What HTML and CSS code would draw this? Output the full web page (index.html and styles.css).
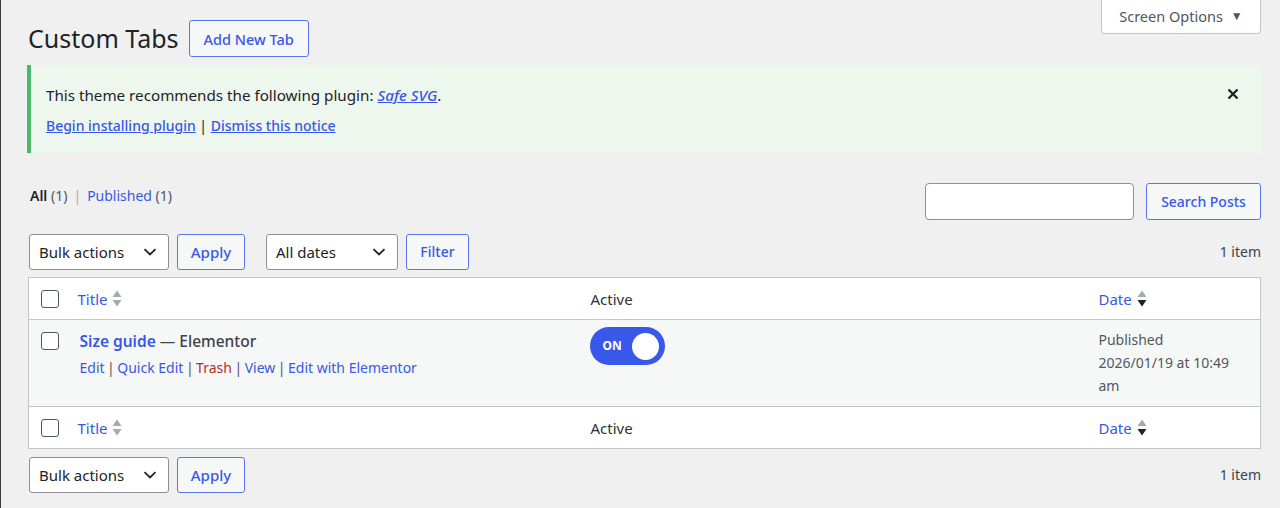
FILE: index.html
```html
<!DOCTYPE html>
<html>
<head>
    <meta charset="utf-8"/>
    <title>Custom Tabs</title>
    <link rel="stylesheet" href="styles.css">
</head>
<body>
<div class="wrap">
    <!--页头-->
    <div class="page-top">
        <div class="heading">
            <h1>Custom Tabs</h1>
            <a class="btn btn-head">Add New Tab</a>
        </div>
        <div class="screen-tab">Screen Options <span class="tab-arrow">&#9660;</span></div>
    </div>

    <!--插件提示-->
    <div class="notice">
        <p class="notice-text">This theme recommends the following plugin: <a class="plugin-link"><em>Safe SVG</em></a>.</p>
        <p class="notice-links"><a>Begin installing plugin</a> | <a>Dismiss this notice</a></p>
        <span class="notice-close">
            <svg width="12" height="12" viewBox="0 0 12 12"><path d="M1.5 1.5L10.5 10.5M10.5 1.5L1.5 10.5" stroke="#1d2327" stroke-width="2.4" fill="none"/></svg>
        </span>
    </div>

    <div class="filter-row">
        <ul class="subsubsub">
            <li class="current">All <span class="count">(1)</span></li>
            <li class="sep">|</li>
            <li><a>Published</a> <span class="count">(1)</span></li>
        </ul>
        <div class="search-box">
            <input class="search-input" type="text">
            <a class="btn">Search Posts</a>
        </div>
    </div>

    <div class="tablenav">
        <div class="actions">
            <div class="select select-bulk"><span>Bulk actions</span>
                <svg width="14" height="8" viewBox="0 0 14 8"><path d="M1.5 1.2L7 6.5L12.5 1.2" stroke="#1d2327" stroke-width="1.8" fill="none"/></svg>
            </div>
            <a class="btn btn-apply">Apply</a>
            <div class="select select-dates"><span>All dates</span>
                <svg width="14" height="8" viewBox="0 0 14 8"><path d="M1.5 1.2L7 6.5L12.5 1.2" stroke="#1d2327" stroke-width="1.8" fill="none"/></svg>
            </div>
            <a class="btn btn-filter">Filter</a>
        </div>
        <div class="num-items">1 item</div>
    </div>

    <table class="list-table">
        <colgroup>
            <col class="col-cb">
            <col class="col-title">
            <col class="col-active">
            <col class="col-date">
        </colgroup>
        <thead>
        <tr>
            <th><span class="checkbox"></span></th>
            <th><a class="sort-link">Title
                <svg class="sort-icon" width="10" height="17" viewBox="0 0 10 17"><path d="M5 0.5L9.5 7H0.5Z" fill="#a7aaad"/><path d="M0.5 10H9.5L5 16.5Z" fill="#a7aaad"/></svg>
            </a></th>
            <th>Active</th>
            <th><a class="sort-link">Date
                <svg class="sort-icon" width="10" height="17" viewBox="0 0 10 17"><path d="M5 0.5L9.5 7H0.5Z" fill="#a7aaad"/><path d="M0.5 10H9.5L5 16.5Z" fill="#1d2327"/></svg>
            </a></th>
        </tr>
        </thead>
        <tbody>
        <tr class="row-alt">
            <td><span class="checkbox checkbox-row"></span></td>
            <td>
                <div class="row-title"><a>Size guide</a> <span class="post-state">&mdash; Elementor</span></div>
                <div class="row-actions"><a>Edit</a><span class="sep">|</span><a>Quick Edit</a><span class="sep">|</span><a class="trash">Trash</a><span class="sep">|</span><a>View</a><span class="sep">|</span><a>Edit with Elementor</a></div>
            </td>
            <td>
                <div class="toggle"><span class="toggle-text">ON</span><span class="toggle-knob"></span></div>
            </td>
            <td class="date-cell">Published<br>2026/01/19 at 10:49<br>am</td>
        </tr>
        </tbody>
        <tfoot>
        <tr>
            <th><span class="checkbox"></span></th>
            <th><a class="sort-link">Title
                <svg class="sort-icon" width="10" height="17" viewBox="0 0 10 17"><path d="M5 0.5L9.5 7H0.5Z" fill="#a7aaad"/><path d="M0.5 10H9.5L5 16.5Z" fill="#a7aaad"/></svg>
            </a></th>
            <th>Active</th>
            <th><a class="sort-link">Date
                <svg class="sort-icon" width="10" height="17" viewBox="0 0 10 17"><path d="M5 0.5L9.5 7H0.5Z" fill="#a7aaad"/><path d="M0.5 10H9.5L5 16.5Z" fill="#1d2327"/></svg>
            </a></th>
        </tr>
        </tfoot>
    </table>

    <div class="tablenav tablenav-bottom">
        <div class="actions">
            <div class="select select-bulk"><span>Bulk actions</span>
                <svg width="14" height="8" viewBox="0 0 14 8"><path d="M1.5 1.2L7 6.5L12.5 1.2" stroke="#1d2327" stroke-width="1.8" fill="none"/></svg>
            </div>
            <a class="btn btn-apply">Apply</a>
        </div>
        <div class="num-items">1 item</div>
    </div>
</div>
</body>
</html>
```

FILE: styles.css
```css
html, body {
    margin: 0;
    padding: 0;
}

body {
    background: #f0f0f1;
    color: #1d2327;
    font-family: "Noto Sans", "Open Sans", sans-serif;
    font-size: 14px;
    line-height: 20px;
    border-left: 1px solid #3c3c3c;
    min-height: 508px;
    box-sizing: border-box;
}

a {
    color: #3858e9;
    text-decoration: none;
}

.wrap {
    padding: 0 19px 0 26px;
}

/* 页头 */
.page-top {
    display: flex;
    justify-content: space-between;
    align-items: flex-start;
}

.heading {
    display: flex;
    align-items: center;
    margin-top: 20px;
}

h1 {
    font-size: 25px;
    font-weight: 400;
    margin: 0 10px 0 1px;
    line-height: 37px;
}

.btn {
    display: inline-flex;
    align-items: center;
    justify-content: center;
    height: 37px;
    box-sizing: border-box;
    padding: 0;
    border: 1px solid #5a74ee;
    border-radius: 3px;
    background: #f6f7f7;
    color: #3858e9;
    font-size: 14px;
    font-weight: 500;
}

.btn-head {
    width: 120px;
    font-size: 14.5px;
}

.screen-tab {
    width: 160px;
    height: 35px;
    box-sizing: border-box;
    margin-top: -1px;
    background: #fff;
    border: 1px solid #c3c4c7;
    border-top: 0;
    border-radius: 0 0 4px 4px;
    color: #50575e;
    font-size: 14.5px;
    display: flex;
    align-items: center;
    justify-content: center;
    padding-bottom: 1px;
}

.tab-arrow {
    font-size: 12px;
    margin-left: 8px;
    color: #50575e;
}

/* 提示框 */
.notice {
    position: relative;
    margin-top: 8px;
    background: #edf7ee;
    border-left: 4px solid #4ab866;
    padding: 20px 40px 17px 15px;
}

.notice p {
    margin: 0;
    line-height: 20px;
}

.notice .notice-text {
    font-size: 15.2px;
}

.notice .notice-links {
    margin-top: 11px;
}

.notice a {
    text-decoration: underline;
    font-weight: 500;
}

.notice-close {
    position: absolute;
    right: 22px;
    top: 23px;
    width: 12px;
    height: 12px;
}

.notice-close svg {
    display: block;
}

/* 筛选 */
.filter-row {
    display: flex;
    justify-content: space-between;
    margin-top: 30px;
}

.subsubsub {
    list-style: none;
    margin: 3px 0 0 3px;
    padding: 0;
    display: flex;
    gap: 6px;
    color: #50575e;
}

.subsubsub .current {
    color: #1d2327;
    font-weight: 600;
}

.subsubsub .current .count {
    font-weight: 400;
    color: #50575e;
}

.subsubsub .sep {
    color: #a7aaad;
}

.search-box {
    display: flex;
    gap: 12px;
}

.search-input {
    width: 209px;
    height: 37px;
    box-sizing: border-box;
    border: 1px solid #8c8f94;
    border-radius: 4px;
    background: #fff;
    margin: 0;
}

.search-box .btn {
    width: 115px;
}

.tablenav {
    display: flex;
    justify-content: space-between;
    align-items: center;
    margin-top: 14px;
    height: 36px;
}

.actions {
    display: flex;
    align-items: center;
    margin-left: 2px;
}

.select {
    height: 36px;
    box-sizing: border-box;
    border: 1px solid #8c8f94;
    border-radius: 3px;
    background: #fff;
    display: flex;
    align-items: center;
    justify-content: space-between;
    padding: 0 11px 0 9px;
    color: #1d2327;
    font-size: 15px;
}

.select svg {
    display: block;
}

.select-bulk {
    width: 140px;
    margin-right: 8px;
}

.select-dates {
    width: 132px;
    margin: 0 8px 0 21px;
}

.actions .btn {
    height: 36px;
}

.btn-apply {
    width: 68px;
    font-size: 15px;
}

.btn-filter {
    width: 63px;
}

.num-items {
    color: #3c434a;
}

/* 列表 */
.list-table {
    margin-top: 7px;
    margin-left: 1px;
    width: calc(100% - 1px);
    border-collapse: collapse;
    table-layout: fixed;
    background: #fff;
    border: 1px solid #c3c4c7;
}

.col-cb {
    width: 39px;
}

.col-title {
    width: 513px;
}

.col-active {
    width: 508px;
}

.list-table th,
.list-table td {
    text-align: left;
    font-weight: 400;
    padding: 0 10px;
    vertical-align: top;
}

.list-table thead th,
.list-table tfoot th {
    height: 41px;
    vertical-align: middle;
    color: #2c3338;
    font-size: 15px;
}

.list-table thead tr {
    border-bottom: 1px solid #c3c4c7;
}

.list-table tfoot tr {
    border-top: 1px solid #c3c4c7;
}

.list-table th:first-child,
.list-table td:first-child {
    padding: 0 0 0 12px;
}

.checkbox {
    display: block;
    width: 18px;
    height: 18px;
    box-sizing: border-box;
    border: 1.5px solid #50575e;
    border-radius: 3px;
    background: #fff;
}

.checkbox-row {
    margin-top: 12px;
}

.sort-link {
    display: inline-flex;
    align-items: center;
    gap: 5px;
}

.sort-icon {
    display: block;
}

.row-alt {
    background: #f6f7f7;
}

.row-alt td {
    height: 87px;
    padding-top: 11px;
    padding-bottom: 0;
    box-sizing: border-box;
}

.row-title {
    padding-left: 2px;
    font-weight: 600;
    font-size: 15.5px;
}

.post-state {
    color: #3c434a;
    font-weight: 500;
}

.row-actions {
    margin-top: 7px;
    padding-left: 2px;
    color: #50575e;
}

.row-actions .sep {
    margin: 0 2.5px;
}

.row-actions .trash {
    color: #b32d2e;
}

.toggle {
    width: 75px;
    height: 38px;
    margin: -4px 0 0 -1px;
    box-sizing: border-box;
    border-radius: 19px;
    background: #3858e9;
    display: flex;
    align-items: center;
    justify-content: space-between;
    padding: 0 6px 0 13px;
}

.toggle-text {
    color: #fff;
    font-size: 12px;
    font-weight: 700;
}

.toggle-knob {
    width: 27px;
    height: 27px;
    border-radius: 50%;
    background: #fff;
}

.list-table .date-cell {
    padding-top: 8px;
    line-height: 23px;
    color: #50575e;
}

.tablenav-bottom {
    margin-top: 8px;
}
```
